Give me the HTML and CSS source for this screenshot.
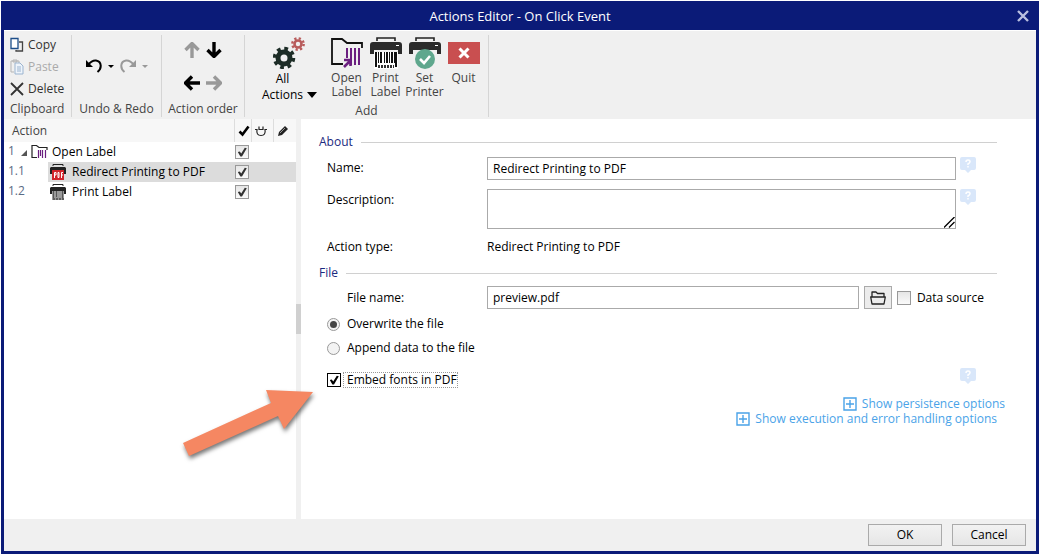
FILE: index.html
```html
<!DOCTYPE html>
<html lang="en">
<head>
<meta charset="utf-8">
<title>Actions Editor - On Click Event</title>
<link rel="stylesheet" href="styles.css">
</head>
<body>
<svg class="defs" aria-hidden="true">
  <symbol id="folder-label" viewBox="0 0 32 30">
    <path d="M12 26H1V1h10l5 4h15v5" fill="none" stroke="#111" stroke-width="1.800"/>
    <path d="M16 10v10M20 10v17M24 10v17M28 10v17" fill="none" stroke="#6b1f80" stroke-width="2"/>
    <path d="M13 29l6-6M13 22h6.500V28" fill="none" stroke="#6b1f80" stroke-width="2.600"/>
  </symbol>
  <symbol id="folder-small" viewBox="0 0 17 16">
    <path d="M6 13.500H1V1.500h4.500L8 3.500h8V6" fill="none" stroke="#222" stroke-width="1.200"/>
    <path d="M7.500 6v8M9.500 6v6M11.500 6v8M14.500 6v8" fill="none" stroke="#6b1f80" stroke-width="1.200"/>
  </symbol>
  <symbol id="help" viewBox="0 0 16 16">
    <path d="M2 0h12a2 2 0 0 1 2 2v9a2 2 0 0 1-2 2h-3l-3 3-3-3H2a2 2 0 0 1-2-2V2a2 2 0 0 1 2-2z" fill="#d9e7fa"/>
    <path d="M6 5q0-2 2-2t2 1.700Q10 6 8 7v1M8 9v1.500" fill="none" stroke="#fff" stroke-width="1.500"/>
  </symbol>
  <symbol id="plus" viewBox="0 0 14 14">
    <path d="M1 1h12v12H1zM3 7h8M7 3v8" fill="none" stroke="#4aa3e8" stroke-width="1.400"/>
  </symbol>
  <symbol id="arrow" viewBox="0 0 16 16">
    <path d="M8 0v13M1.500 8L8 14.500 14.500 8" fill="none" stroke="currentColor" stroke-width="3.400"/>
  </symbol>
  <symbol id="undo" viewBox="0 0 18 14">
    <path d="M3 6Q7 1 11 1.500c6 1 6 8 1.500 11.500" fill="none" stroke="currentColor" stroke-width="2"/>
    <path d="M1 1v7h7z" fill="currentColor"/>
  </symbol>
  <symbol id="printer" viewBox="0 0 32 32">
    <path d="M7 4V1h18v3" fill="none" stroke="#222" stroke-width="1.600"/>
    <path d="M3 5h26q3 0 3 3v9h-4v-4H4v4H0V8q0-3 3-3z" fill="#2b2b2b"/>
    <path d="M26 8.500h3" stroke="#fff"/>
  </symbol>
</svg>
<main class="window">
  <header class="titlebar">
    <h1 class="title">Actions Editor - On Click Event</h1>
    <button class="close" aria-label="Close"><svg width="12" height="12" viewBox="0 0 12 12"><path d="M1 1l10 10M11 1L1 11" stroke="#b9bfe0" stroke-width="2.400"/></svg></button>
  </header>

  <nav class="ribbon">
    <section class="group clipboard">
      <div class="stack">
        <button class="command"><svg width="14" height="16" viewBox="0 0 14 16"><path d="M1 1.500h7v10H1z" fill="#fff" stroke="#1d4e89" stroke-width="1.300"/><path d="M9 5h3.500v9H6v-1" fill="none" stroke="#444" stroke-width="1.300"/></svg>Copy</button>
        <button class="command" disabled><svg width="14" height="16" viewBox="0 0 14 16"><path d="M4 13H1V2h8v2M3 1h4v2H3z" fill="none" stroke="#b5b5b5"/><path d="M5 4h5l3 3v8H5zM7 8h4M7 10h4M7 12h4" fill="#eef4fb" stroke="#9bb4cf"/></svg>Paste</button>
        <button class="command"><svg width="14" height="16" viewBox="0 0 14 16"><path d="M1 2l12 12M13 2L1 14" stroke="#333" stroke-width="1.800"/></svg>Delete</button>
      </div>
      <h2 class="caption">Clipboard</h2>
    </section>
    <section class="group history">
      <div class="pair">
        <button class="flat" aria-label="Undo"><svg width="18" height="14"><use href="#undo"/></svg><i class="caret"></i></button>
        <button class="flat faded" aria-label="Redo"><svg class="mirror" width="18" height="14"><use href="#undo"/></svg><i class="caret"></i></button>
      </div>
      <h2 class="caption">Undo &amp; Redo</h2>
    </section>
    <section class="group order">
      <div class="arrows">
        <button class="flat faded up" aria-label="Move up"><svg width="16" height="16"><use href="#arrow"/></svg></button>
        <button class="flat" aria-label="Move down"><svg width="16" height="16"><use href="#arrow"/></svg></button>
        <button class="flat left" aria-label="Move left"><svg width="16" height="16"><use href="#arrow"/></svg></button>
        <button class="flat faded right" aria-label="Move right"><svg width="16" height="16"><use href="#arrow"/></svg></button>
      </div>
      <h2 class="caption">Action order</h2>
    </section>
    <section class="group add">
      <div class="tools">
        <button class="tool all">
          <svg width="32" height="32" viewBox="0 0 32 32">
            <circle cx="11" cy="21" r="6" fill="none" stroke="#1c2c26" stroke-width="5"/>
            <circle cx="11" cy="21" r="9.500" fill="none" stroke="#1c2c26" stroke-width="3.500" stroke-dasharray="3.730 3.730"/>
            <circle cx="25" cy="7" r="3.500" fill="none" stroke="#b85c5c" stroke-width="2.600"/>
            <circle cx="25" cy="7" r="5.700" fill="none" stroke="#b85c5c" stroke-width="2.400" stroke-dasharray="2.240 2.240"/>
          </svg>
          <span>All<br>Actions</span><i class="caret big"></i>
        </button>
        <button class="tool"><svg width="32" height="32" viewBox="0 0 32 30"><use href="#folder-label"/></svg><span>Open<br>Label</span></button>
        <button class="tool"><svg width="32" height="32" viewBox="0 0 32 32">
            <use href="#printer"/>
            <path d="M4 15h24v17H4z" fill="#fff"/>
            <path d="M6 15v15M11 15v11M17 15v11M22 15v11M26 15v15" stroke="#111" stroke-width="2"/><path d="M8.500 15v11M14.500 15v11M19.500 15v11M24.500 15v11" stroke="#111"/>
            <path d="M8 29.500h16" stroke="#333" stroke-width="3" stroke-dasharray="2 1"/></svg><span>Print<br>Label</span></button>
        <button class="tool"><svg width="32" height="32" viewBox="0 0 32 32">
            <use href="#printer"/>
            <circle cx="16" cy="22" r="10" fill="#5fa78d"/><path d="M11 22l4 4 6-7" fill="none" stroke="#fff" stroke-width="2.600"/></svg><span>Set<br>Printer</span></button>
        <button class="tool"><svg width="32" height="32" viewBox="0 0 32 32"><path d="M0 5h32v22H0z" fill="#c94f50"/><path d="M11.500 11.500l9 9M20.500 11.500l-9 9" stroke="#fff" stroke-width="3"/></svg><span>Quit</span></button>
      </div>
      <h2 class="caption">Add</h2>
    </section>
  </nav>

  <div class="body">
    <aside class="tree">
      <table>
        <colgroup><col class="c-level"><col class="c-indent"><col><col class="c-check"><col class="c-plug"><col class="c-edit"></colgroup>
        <thead><tr>
          <th colspan="3">Action</th>
          <th class="mark"><svg width="12" height="12" viewBox="0 0 12 12"><path d="M1.500 6.500L4.500 9.500 10.500 1.500" fill="none" stroke="#000" stroke-width="2.600"/></svg></th>
          <th class="mark"><svg width="12" height="12" viewBox="0 0 12 12"><path d="M0 4.500h2q-1 6 4 6t4-6h2M4 1.500v3h4v-3" fill="none" stroke="#222" stroke-width="1.200"/></svg></th>
          <th class="mark"><svg width="12" height="12" viewBox="0 0 12 12"><path d="M1 11l1-4 6-6 3 3-6 6z" fill="#222"/><path d="M3 8l5-5" stroke="#999"/></svg></th>
        </tr></thead>
        <tbody>
          <tr><td class="level">1</td><td colspan="2"><div class="node root"><svg width="7" height="7" viewBox="0 0 7 7"><path d="M7 1v6H1z" fill="#555"/></svg><svg width="17" height="16"><use href="#folder-small"/></svg><span>Open Label</span></div></td><td class="mark"><input class="box" type="checkbox" checked aria-label="Enable Open Label"></td><td></td><td></td></tr>
          <tr class="selected"><td class="level" colspan="2">1.1</td><td><div class="node"><svg width="16" height="16" viewBox="0 0 16 16"><path d="M3 2V.500h10V2" fill="none" stroke="#222"/><path d="M1 3h14l1 1v6H0V4z" fill="#222"/><path d="M2 6h12v10H2z" fill="#d2232a"/><path d="M4.500 14V8.500h1.500V11H4.500M8 8.500v5h1v-5zM11.500 14V8.500H13M11.500 11H13" fill="none" stroke="#fff"/></svg><span>Redirect Printing to PDF</span></div></td><td class="mark"><input class="box" type="checkbox" checked aria-label="Enable Redirect Printing to PDF"></td><td></td><td></td></tr>
          <tr><td class="level" colspan="2">1.2</td><td><div class="node"><svg width="16" height="16" viewBox="0 0 16 16"><path d="M3 2V.500h10V2" fill="none" stroke="#222"/><path d="M1 3h14l1 1v6H0V4z" fill="#222"/><path d="M2 7h12v9H2z" fill="#999"/><path d="M3.500 7v7M6.500 7v6M12.500 7v7" stroke="#555"/><path d="M3 15h11" stroke="#222" stroke-dasharray="2 1"/></svg><span>Print Label</span></div></td><td class="mark"><input class="box" type="checkbox" checked aria-label="Enable Print Label"></td><td></td><td></td></tr>
        </tbody>
      </table>
    </aside>
    <div class="splitter"><i class="grip"></i></div>
    <form class="pane">
      <h2 class="legend">About</h2>
      <div class="fields">
        <label for="name">Name:</label><input class="text" id="name" value="Redirect Printing to PDF"><svg width="16" height="16"><use href="#help"/></svg>
        <label for="desc">Description:</label>
        <div class="area"><textarea class="text" id="desc"></textarea><svg class="resize" width="11" height="11" viewBox="0 0 11 11"><path d="M0 10.500L10.500 0M5 10.500L10.500 5" stroke="#000" stroke-width="1.300"/></svg></div>
        <svg width="16" height="16"><use href="#help"/></svg>
        <span>Action type:</span><span>Redirect Printing to PDF</span>
      </div>
      <h2 class="legend">File</h2>
      <div class="file">
        <label class="filename" for="file">File name:</label>
        <input class="text" id="file" value="preview.pdf">
        <button class="browse" type="button" aria-label="Browse"><svg width="16" height="14" viewBox="0 0 16 14"><path d="M2 6V1h4l1.500 1.500H14V6M.700 6h14.600L14 13H2z" fill="none" stroke="#222" stroke-width="1.300" stroke-linejoin="round"/></svg></button>
        <label class="source"><input class="box" type="checkbox">Data source</label>
      </div>
      <div class="options">
        <label class="choice"><input class="radio" type="radio" name="mode" checked>Overwrite the file</label>
        <label class="choice"><input class="radio" type="radio" name="mode">Append data to the file</label>
        <div class="embed">
          <label class="choice"><input class="box strong" type="checkbox" checked><span class="focus">Embed fonts in PDF</span></label>
          <svg width="16" height="16"><use href="#help"/></svg>
        </div>
      </div>
      <div class="links">
        <a class="more wide" href="#"><svg width="14" height="14"><use href="#plus"/></svg>Show persistence options</a>
        <a class="more" href="#"><svg width="14" height="14"><use href="#plus"/></svg>Show execution and error handling options</a>
      </div>
    </form>
    <svg class="pointer" width="140" height="84" viewBox="0 0 140 84"><path d="M7 63L95 23 90 10 137 12 108 49 102 36 13 76z" fill="#f58762"/></svg>
  </div>

  <footer class="footer">
    <button class="push">OK</button>
    <button class="push">Cancel</button>
  </footer>
</main>
</body>
</html>
```
FILE: styles.css
```css
* { box-sizing: border-box; }
body { margin: 0; padding: 1px; background: #fff; color: #000; font: 12px/16px "Open Sans", "Noto Sans", sans-serif; }
button, input, textarea { font: inherit; color: inherit; margin: 0; }
h1, h2 { margin: 0; font: inherit; }
svg { display: block; flex: none; }
.defs { position: absolute; width: 0; height: 0; }
.window { display: flex; flex-direction: column; min-height: calc(100vh - 2px); border: 3px solid #0b1b78; border-top: 0; background: #fff; }

.titlebar { display: flex; align-items: center; height: 29px; background: #0b1b78; color: #fff; }
.title { flex: 1; padding-left: 19px; text-align: center; font-size: 13px; }
.close { padding: 0; margin-right: 7px; border: 0; background: none; }

.ribbon { display: flex; padding: 4px 0 2px; height: 89px; background: #f0f0f0; border-top: 1px solid #fff; color: #444; }
.group { display: flex; flex-direction: column; justify-content: space-between; border-right: 1px solid #d5d5d5; }
.caption { text-align: center; }
.clipboard { width: 68px; padding-left: 6px; }
.clipboard .caption { text-align: left; }
.history { width: 90px; }
.order { width: 83px; }
.add { width: 244px; }
.stack { display: flex; flex-direction: column; gap: 6px; padding-top: 2px; }
.command { display: flex; align-items: center; gap: 4px; padding: 0; border: 0; background: none; height: 16px; color: #333; }
.command:disabled { color: #aaa; }
.flat { display: flex; align-items: center; gap: 5px; padding: 0; border: 0; background: none; color: #000; }
.faded { color: #999; }
.caret { border: 3px solid transparent; border-top-color: currentColor; border-bottom: 0; }
.pair { display: flex; justify-content: center; gap: 5px; padding-top: 24px; }
.mirror { transform: scaleX(-1); }
.arrows { display: grid; grid-template-columns: 16px 16px; gap: 17px 6px; justify-content: center; padding-top: 7px; }
.up { transform: rotate(180deg); }
.left { transform: rotate(90deg); }
.right { transform: rotate(-90deg); }
.tools { display: flex; height: 68px; padding: 2px 5px 0 9px; }
.tool { position: relative; display: flex; flex-direction: column; align-items: center; gap: 2px; width: 39px; padding: 0; border: 0; background: none; line-height: 14px; color: #444; white-space: nowrap; }
.all { width: 73px; padding-right: 16px; line-height: 16px; color: #000; }
.all svg { margin-left: 12px; }
.big { position: absolute; right: 10px; bottom: 5px; border-width: 6px 5px 0; }

.body { position: relative; flex: 1; display: flex; }
.tree { width: 292px; }
.tree table { width: 100%; table-layout: fixed; border-collapse: collapse; }
.tree th, .tree td { padding: 0; height: 20px; font-weight: normal; text-align: left; }
.tree th { height: 23px; padding-left: 8px; background: #f7f7f7; color: #444; }
.tree .mark { padding: 0; }
.tree th.mark { border-left: 1px solid #ddd; }
.mark svg { margin: 0 auto 0 3px; }
.mark input { margin: 0 auto 0 1px; }
.c-level { width: 16px; }
.c-indent { width: 28px; }
.c-check { width: 17px; }
.c-plug { width: 22px; }
.c-edit { width: 23px; }
.tree .level { padding-left: 4px; vertical-align: top; line-height: 18px; color: #5a6b85; }
.selected td:not(.level) { background: #dcdcdc; }
.node { display: flex; align-items: center; gap: 6px; padding-left: 2px; height: 20px; white-space: nowrap; }
.root { gap: 4px; padding-left: 0; }
.splitter { display: flex; align-items: center; width: 5px; background: #f0f0f0; }
.grip { width: 5px; height: 30px; background: #d0d0d0; }

.box { appearance: none; display: grid; place-items: center; flex: none; width: 14px; height: 14px; border: 1px solid #999; background: linear-gradient(#e6e6e6, #fafafa); }
.box:checked::before { content: ""; width: 10px; height: 10px; background: #333; clip-path: polygon(8% 50%, 28% 45%, 42% 66%, 78% 8%, 98% 12%, 50% 96%, 34% 96%); }
.strong { border-color: #000; background: #fff; }
.strong:checked::before { background: #000; }
.radio { appearance: none; display: grid; place-items: center; width: 13px; height: 13px; border: 1px solid #999; border-radius: 50%; background: #f3f3f3; }
.radio:checked::before { content: ""; width: 7px; height: 7px; border-radius: 50%; background: #444; }

.pane { flex: 1; padding: 15px 39px 0 18px; }
.legend { display: flex; align-items: center; gap: 8px; color: #1b2a80; }
.legend::after { content: ""; flex: 1; height: 1px; background: #d0d0d0; }
.text { width: 100%; height: 23px; padding: 0 5px; border: 1px solid #aaa; border-radius: 0; background: #fff; outline: 0; }
.fields { display: grid; grid-template-columns: 160px 1fr 20px; row-gap: 9px; padding: 7px 21px 10px 8px; }
.fields > svg { margin-left: 4px; }
.fields label { padding-top: 3px; }
.area { position: relative; height: 41px; }
.area .text { display: block; height: 40px; resize: none; }
.resize { position: absolute; right: 1px; bottom: 2px; }
.file { display: flex; align-items: center; padding: 5px 13px 0 28px; }
.filename { flex: none; width: 140px; }
.file .text { flex: 1; min-width: 0; }
.browse { display: grid; place-items: center; width: 28px; height: 23px; margin: 0 5px; padding: 0; border: 1px solid #aaa; background: #ececec; }
.source, .choice { display: flex; align-items: center; gap: 6px; white-space: nowrap; }
.choice { gap: 7px; }
.options { display: flex; flex-direction: column; gap: 8px; padding: 7px 21px 0 8px; }
.embed { display: flex; align-items: flex-start; justify-content: space-between; padding-top: 4px; }
.embed .choice { gap: 2px; padding-top: 4px; }
.focus { padding: 0 0 0 3px; border: 1px dotted #999; line-height: 14px; }
.links { display: flex; flex-direction: column; align-items: flex-end; padding-top: 8px; }
.more { display: flex; align-items: center; gap: 5px; line-height: 15px; color: #4aa3e8; text-decoration: none; }
.wide { margin-right: -8px; }
.pointer { position: absolute; left: 172px; top: 261px; filter: drop-shadow(1px 3px 2px #0008); }

.footer { display: flex; justify-content: flex-end; gap: 10px; height: 32px; padding: 5px 10px; background: #f0f0f0; }
.push { width: 74px; height: 22px; padding: 0; border: 1px solid #aaa; background: linear-gradient(#f2f2f2, #e6e6e6); }
```
